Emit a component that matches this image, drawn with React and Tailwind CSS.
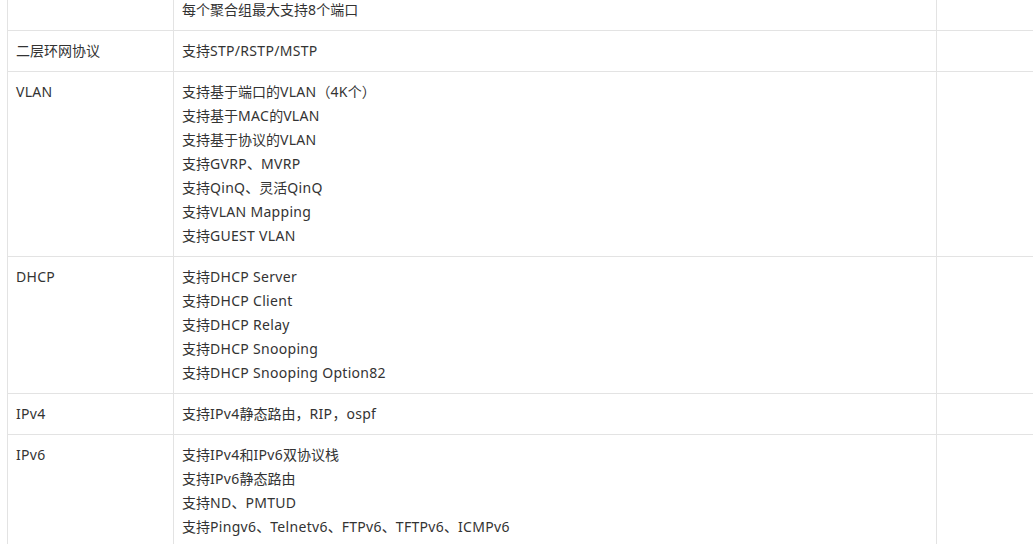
import React from 'react';

const rows = [
  { name: '', items: ['每个聚合组最大支持8个端口'] },
  { name: '二层环网协议', items: ['支持STP/RSTP/MSTP'] },
  {
    name: 'VLAN',
    items: [
      '支持基于端口的VLAN（4K个）',
      '支持基于MAC的VLAN',
      '支持基于协议的VLAN',
      '支持GVRP、MVRP',
      '支持QinQ、灵活QinQ',
      '支持VLAN Mapping',
      '支持GUEST VLAN',
    ],
  },
  {
    name: 'DHCP',
    items: [
      '支持DHCP Server',
      '支持DHCP Client',
      '支持DHCP Relay',
      '支持DHCP Snooping',
      '支持DHCP Snooping Option82',
    ],
  },
  { name: 'IPv4', items: ['支持IPv4静态路由，RIP，ospf'] },
  {
    name: 'IPv6',
    items: [
      '支持IPv4和IPv6双协议栈',
      '支持IPv6静态路由',
      '支持ND、PMTUD',
      '支持Pingv6、Telnetv6、FTPv6、TFTPv6、ICMPv6',
    ],
  },
];

// latin runs are a bit wider in the original font
const Txt = ({ text }) =>
  text.split(/([A-Za-z0-9 /]+)/).map((part, k) =>
    /[A-Za-z0-9]/.test(part) ? (
      <span key={k} className="tracking-[0.3px]">{part}</span>
    ) : (
      <span key={k}>{part}</span>
    )
  );

const App = () => {
  return (
    <div
      className="w-[1033px] h-[544px] overflow-hidden bg-white text-[14px] leading-[24px] text-[#333]"
      style={{ fontFamily: '"Noto Sans", "Noto Sans CJK SC", sans-serif' }}
    >
      <table className="table-fixed border-collapse mt-[-11px] ml-[7px] w-[1130px]">
        <colgroup>
          <col className="w-[166px]" />
          <col className="w-[763px]" />
          <col className="w-[201px]" />
        </colgroup>
        <tbody>
          {rows.map((row, i) => (
            <tr key={i}>
              <td className="border border-[#e3e3e3] px-2 py-2 align-top">
                <Txt text={row.name} />
              </td>
              <td className="border border-[#e3e3e3] px-2 py-2 align-top">
                {row.items.map((t, j) => (
                  <div key={j}>
                    <Txt text={t} />
                  </div>
                ))}
              </td>
              <td className="border border-[#e3e3e3] px-2 py-2 align-top"></td>
            </tr>
          ))}
        </tbody>
      </table>
    </div>
  );
};

export default App;
